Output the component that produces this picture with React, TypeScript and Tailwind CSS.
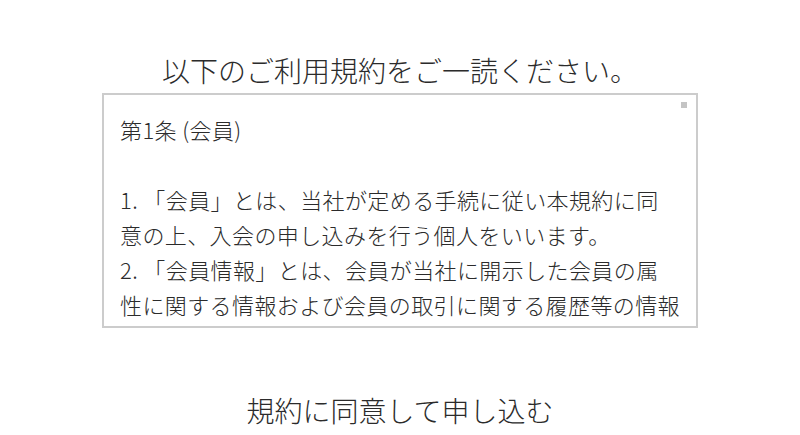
import * as React from 'react';

const jp = '"Noto Sans CJK JP", "Noto Sans", sans-serif';

// Only the lines that show inside the box; the rest of the terms scroll out of view.
const terms: string[][] = [
  ['第1条 (会員)'],
  [''],
  ['1. 「会員」とは、当社が定める手続に従い本規約に同', '意の上、入会の申し込みを行う個人をいいます。'],
  ['2. 「会員情報」とは、会員が当社に開示した会員の属', '性に関する情報および会員の取引に関する履歴等の情報'],
];

export default function App() {
  return (
    <div className="min-h-[435px] bg-white text-[#2b2b2b]" style={{ fontFamily: jp }}>
      <div className="mx-auto w-[596px] pt-[50px]">
        <h1 className="text-center text-[28px] leading-[40px] font-light">
          以下のご利用規約をご一読ください。
        </h1>

        <div className="relative mt-[3px] h-[235px] overflow-hidden border-2 border-[#cccccc] pl-[16px] pr-[10px] pt-[17px]">
          <span className="absolute right-[9px] top-[7px] h-[6px] w-[6px] bg-[#c4c4c4]" />
          <div className="text-[22px] leading-[35px] tracking-[0.4px] font-light whitespace-nowrap">
            {terms.map((para, i) => (
              <p key={i} className="min-h-[35px]">
                {para.map((line, j) => (
                  <React.Fragment key={j}>
                    {j > 0 && <br />}
                    {line}
                  </React.Fragment>
                ))}
              </p>
            ))}
          </div>
        </div>

        <div className="mt-[62px] text-center">
          <button type="button" className="text-[28px] leading-[40px] font-light">
            規約に同意して申し込む
          </button>
        </div>
      </div>
    </div>
  );
}
